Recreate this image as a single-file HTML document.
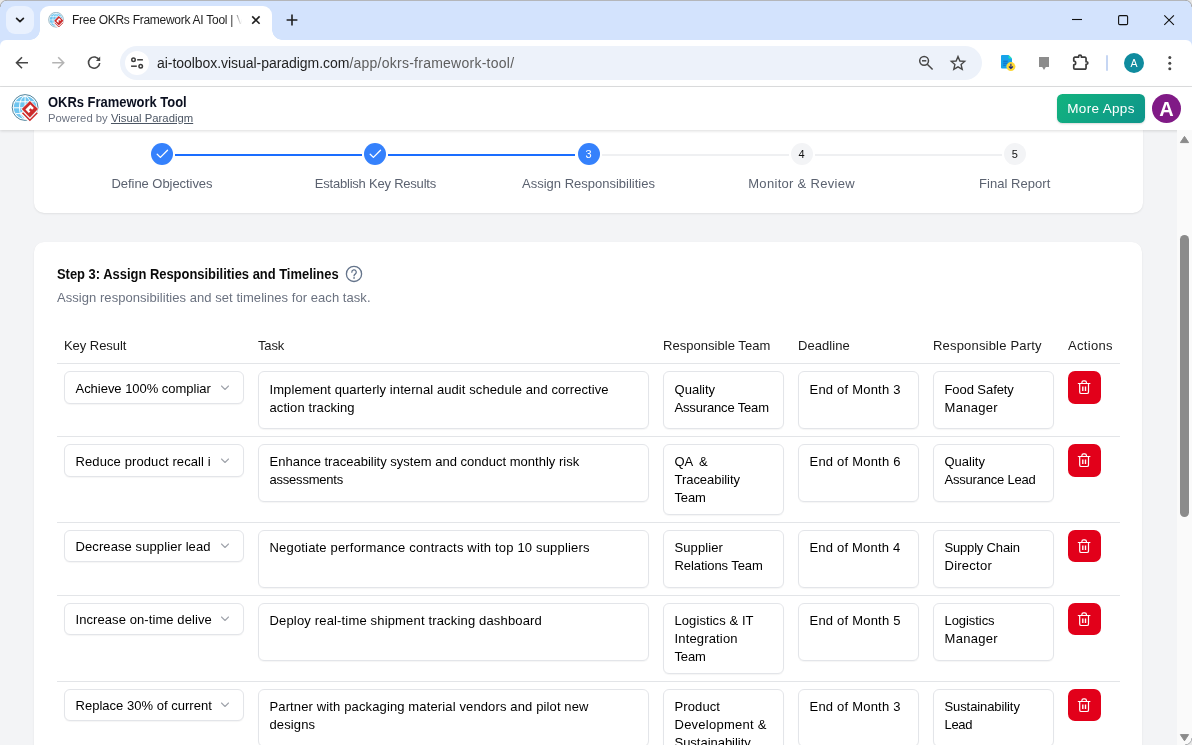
<!DOCTYPE html>
<html lang="en">
<head>
<meta charset="utf-8">
<title>Free OKRs Framework AI Tool | Visual Paradigm</title>
<style>
*{box-sizing:border-box;margin:0;padding:0}
html,body{width:1192px;height:745px;overflow:hidden;background:#f3f4f6}
body{font-family:"Liberation Sans",sans-serif;color:#111;position:relative}
#root{position:absolute;left:0;top:0;width:1192px;height:745px;overflow:hidden;will-change:transform}
.abs{position:absolute}
.nw{white-space:nowrap}
/* ---------- browser chrome ---------- */
#tabstrip{left:0;top:0;width:1192px;height:50px;background:#d3e3fd;border-top:1px solid #b4b6ba}
#tabsearch{left:6px;top:6px;width:28px;height:28px;border-radius:9px;background:#e9f1fe}
#tab{left:40px;top:6px;width:232px;height:34px;background:#fff;border-radius:9px 9px 0 0}
#tab:before,#tab:after{content:"";position:absolute;bottom:0;width:10px;height:10px}
#tab:before{left:-10px;background:radial-gradient(circle at 0 0,rgba(255,255,255,0) 9.5px,#fff 10px)}
#tab:after{right:-10px;background:radial-gradient(circle at 100% 0,rgba(255,255,255,0) 9.5px,#fff 10px)}
#tabtitle{left:72px;top:12px;font-size:12px;line-height:16px;color:#1f1f1f;width:170px;overflow:hidden;white-space:nowrap}
#tabfade{left:231px;top:10px;width:11px;height:20px;background:linear-gradient(90deg,rgba(255,255,255,0),#fff)}
#toolbar{left:0;top:40px;width:1192px;height:47px;background:#fff;border-bottom:1px solid #dfe0e1;border-radius:6px 6px 0 0}
#omni{left:120px;top:46px;width:862px;height:34px;border-radius:17px;background:#edf2fa}
#siteinfo{left:125px;top:51px;width:24px;height:24px;border-radius:12px;background:#fff}
#url{left:157px;top:54px;font-size:14px;line-height:18px;color:#1f1f1f;white-space:nowrap}
#url b{font-weight:normal}
#url span{color:#5e5e5e}
/* ---------- app ---------- */
#apphead{left:0;top:87px;width:1192px;height:43px;background:#fff;box-shadow:0 1px 3px rgba(0,0,0,.14)}
#apptitle{left:48px;top:93px;transform-origin:0 50%;font-size:14px;line-height:18px;font-weight:bold;color:#0b1020;white-space:nowrap}
#appsub{left:48px;top:111px;font-size:11.3px;line-height:14px;color:#6b7280;white-space:nowrap}
#appsub u{color:#4b5563}
#moreapps{left:1057px;top:94px;width:88px;height:29px;border-radius:5.5px;background:linear-gradient(135deg,#12b37e,#0e958b);color:#fff;font-size:13.5px;line-height:30px;text-align:center;box-shadow:0 1px 2px rgba(0,0,0,.15)}
#avatar{left:1152px;top:94px;width:29px;height:29px;border-radius:15px;background:#801a86;color:#fff;font-weight:bold;font-size:20px;line-height:30px;text-align:center}
#sbtrack{left:1177px;top:130px;width:15px;height:615px;background:#fafafa}
#sbthumb{left:1180px;top:235px;width:9px;height:282px;border-radius:4.5px;background:#8b8b8b}
.card{background:#fff;left:34px;width:1108px;box-shadow:0 1px 2px rgba(0,0,0,.08),0 0 1px rgba(0,0,0,.06)}
#card1{top:118px;height:95px;border-radius:10px;left:33.8px;width:1109.5px}
#card2{top:242.4px;height:520px;border-radius:10px;left:34.4px;width:1107.4px}
.step{width:22px;height:22px;border-radius:11px;top:143px;font-size:11px;line-height:22px;text-align:center}
.step.done{background:#3581fc;color:#fff}
.step.todo{background:#f3f4f6;color:#111}
.sline{top:154px;height:2px}
.slabel{top:175px;font-size:13px;line-height:18px;color:#5b6270;white-space:nowrap;transform:translateX(-50%)}
#h2{left:57px;top:264px;transform-origin:0 50%;font-size:14px;line-height:20px;font-weight:bold;color:#0a0a0a;white-space:nowrap}
#sub{left:57px;top:289px;font-size:13px;line-height:18px;color:#6b7280;white-space:nowrap}
.th{top:337px;font-size:13px;line-height:18px;color:#1a1a1a;white-space:nowrap}
.hr{left:57px;width:1063px;height:1px;background:#e3e5e8}
.box{background:#fff;border:1px solid #e3e5e9;border-radius:6px;font-size:13px;line-height:18px;color:#000;padding:9px 10.5px 0;overflow:hidden;box-shadow:0 1px 1px rgba(0,0,0,.04)}
.sel{left:64px;width:180px;height:33px;white-space:nowrap;padding-top:8px}
.del{left:1068px;width:33px;height:33px;border-radius:7px;background:#e2001a}
</style>
</head>
<body>
<div id="root">
<!-- browser chrome -->

<div id="tabstrip" class="abs"></div>
<div id="tabsearch" class="abs"></div>
<div id="tab" class="abs"></div>
<div id="tabtitle" class="abs"><span id="tt" style="letter-spacing:-0.271px">Free OKRs Framework AI Tool |</span> Visual Paradigm</div>
<div id="tabfade" class="abs"></div>
<div id="toolbar" class="abs"></div>
<div id="omni" class="abs"></div>
<div id="siteinfo" class="abs"></div>
<div id="url" class="abs"><b id="urld" style="letter-spacing:-0.046px">ai-toolbox.visual-paradigm.com</b><span id="urlp" style="letter-spacing:0.247px">/app/okrs-framework-tool/</span></div>

<div class="abs" style="left:0;top:0;width:7px;height:7px;background:radial-gradient(circle at 7px 7px,rgba(255,255,255,0) 6px,#a9abae 6.7px,#e8e8e8 7.6px)"></div>
<div class="abs" style="left:1185px;top:0;width:7px;height:7px;background:radial-gradient(circle at 0 7px,rgba(255,255,255,0) 6px,#a9abae 6.7px,#e8e8e8 7.6px)"></div>
<div class="abs" style="left:1185px;top:738px;width:7px;height:7px;background:radial-gradient(circle at 0 0,rgba(255,255,255,0) 6px,#a9abae 6.7px,#e8e8e8 7.6px);z-index:9"></div>
<!-- tab strip icons -->
<svg class="abs" style="left:14px;top:14px" width="12" height="12" viewBox="0 0 12 12"><path d="M2.6 4.3L6 7.7l3.4-3.4" fill="none" stroke="#1f1f1f" stroke-width="1.7" stroke-linecap="round" stroke-linejoin="round"/></svg>
<svg class="abs" style="left:48px;top:12px" width="16" height="16" viewBox="0 0 28 28"><circle cx="14.1" cy="13.5" r="12.9" fill="#fff" stroke="#3b7590" stroke-width="0.9"/>
<circle cx="14.1" cy="13.5" r="11.3" fill="#6ec5f0"/>
<g fill="none" stroke="#fff" stroke-width="1">
<path d="M2.5 13.8h23M4.5 7.8h19M4.5 19.6h19M14.1 2v23"/>
<ellipse cx="14.1" cy="13.5" rx="5.6" ry="11.3"/>
</g>
<path d="M10.4 18.2l8.5 8.5 8.5-8.5" fill="none" stroke="#fff" stroke-width="3.6"/>
<path d="M11.5 18.8l7.4 7.4 7.4-7.4" fill="none" stroke="#cc2b2b" stroke-width="1.6"/>
<path d="M18.9 6.2l9 9-9 9-9-9z" fill="#fff"/>
<path d="M18.9 6.9l8.1 8.2-8.1 8.4-8.1-8.4z" fill="#cc2b2b"/>
<path d="M19.4 10.6l3.4 3.4-1.7 1.7-1.5-1.5-1.7 1.7 1.5 1.5-1.6 1.6-3.4-3.4z" fill="#fff"/></svg>
<svg class="abs" style="left:250px;top:14px" width="12" height="12" viewBox="0 0 12 12"><path d="M2.2 2.4l7.4 7.4M9.6 2.4L2.2 9.8" fill="none" stroke="#1f1f1f" stroke-width="1.6"/></svg>
<svg class="abs" style="left:285px;top:13px" width="14" height="14" viewBox="0 0 14 14"><path d="M7 1.6v10.8M1.6 7h10.8" fill="none" stroke="#1f1f1f" stroke-width="1.6"/></svg>
<svg class="abs" style="left:1066px;top:10px" width="120" height="20" viewBox="0 0 120 20"><g fill="none" stroke="#111" stroke-width="1.1"><path d="M6 9.5h10"/><rect x="52.6" y="5.6" width="9" height="9" rx="1.2"/><path d="M98.3 5.3l9.6 9.6M107.9 5.3l-9.6 9.6"/></g></svg>
<!-- toolbar icons -->
<svg class="abs" style="left:12px;top:53px" width="20" height="20" viewBox="0 0 20 20"><path d="M16 9.8H5M10 4.3L4.5 9.8 10 15.3" fill="none" stroke="#474747" stroke-width="1.6" stroke-linejoin="miter"/></svg>
<svg class="abs" style="left:48px;top:53px" width="20" height="20" viewBox="0 0 20 20"><path d="M4.2 9.8h11M10.2 4.3l5.5 5.5-5.5 5.5" fill="none" stroke="#b4b4b4" stroke-width="1.6"/></svg>
<svg class="abs" style="left:84px;top:53px" width="20" height="20" viewBox="0 0 20 20"><path d="M15.2 7.2A5.6 5.6 0 1 0 15.7 10" fill="none" stroke="#474747" stroke-width="1.6"/><path d="M16.2 3.6v4.3h-4.3z" fill="#474747"/></svg>
<svg class="abs" style="left:127px;top:53px" width="20" height="20" viewBox="0 0 20 20"><g fill="none" stroke="#3c3c3c" stroke-width="1.5"><circle cx="6.5" cy="6.8" r="1.75"/><path d="M10.2 6.8h5.7"/><circle cx="13.7" cy="13.2" r="1.75"/><path d="M4.1 13.2h5.7"/></g></svg>
<svg class="abs" style="left:916px;top:53px" width="20" height="20" viewBox="0 0 20 20"><g fill="none" stroke="#474747" stroke-width="1.5"><circle cx="8.1" cy="7.8" r="4.4"/><path d="M11.3 11.2l5.3 5.3"/><path d="M6 7.8h4.3"/></g></svg>
<svg class="abs" style="left:948px;top:53px" width="20" height="20" viewBox="0 0 20 20"><path d="M10 3.6l1.9 4.4 4.8.4-3.6 3.2 1.1 4.7-4.2-2.5-4.2 2.5 1.1-4.7-3.6-3.2 4.8-.4z" fill="none" stroke="#474747" stroke-width="1.4" stroke-linejoin="miter"/></svg>
<svg class="abs" style="left:998px;top:52px" width="22" height="22" viewBox="0 0 22 22"><path d="M4 3h6.6l3.4 3.4V16.5H4a1 1 0 0 1-1-1V4a1 1 0 0 1 1-1z" fill="#17a3ea"/><path d="M10.6 3l3.4 3.4h-3.4z" fill="#1de9b6"/><path d="M5.2 9.2h4.6M5.2 11.2h4.6M5.2 13.2h2.6" stroke="#1259b8" stroke-width="0.8"/><circle cx="12.9" cy="14.6" r="4.5" fill="#fdd835"/><path d="M12.9 11.8v4.6M10.9 14.5l2 2 2-2" fill="none" stroke="#1a237e" stroke-width="1.1"/></svg>
<svg class="abs" style="left:1036px;top:54px" width="16" height="18" viewBox="0 0 16 18"><path d="M3 3h10v10h-3.2L8 16 6.2 13H3z" fill="#8c8c8c"/></svg>
<svg class="abs" style="left:1071px;top:53px" width="20" height="20" viewBox="0 0 20 20"><path d="M3.95 4.15H7.55V3.6A1.45 1.45 0 0 1 10.45 3.6V4.15H13.85A1.2 1.2 0 0 1 15.05 5.35V8.75H15.6A1.25 1.25 0 0 1 15.6 11.25H15.05V14.95A1.2 1.2 0 0 1 13.85 16.15H3.95A1.2 1.2 0 0 1 2.75 14.95V11.8A1.9 1.9 0 0 0 2.75 8V5.35A1.2 1.2 0 0 1 3.95 4.15Z" fill="none" stroke="#3c3c3c" stroke-width="1.7" stroke-linejoin="round"/></svg>
<div class="abs" style="left:1106px;top:55px;width:2px;height:16px;background:#c6d6f3;border-radius:1px"></div>
<div class="abs" style="left:1124px;top:53px;width:20px;height:20px;border-radius:10px;background:#0f8b9e;color:#fff;font-size:10.5px;line-height:20px;text-align:center">A</div>
<svg class="abs" style="left:1160px;top:53px" width="20" height="20" viewBox="0 0 20 20"><g fill="#474747"><circle cx="9.8" cy="4.6" r="1.5"/><circle cx="9.8" cy="10.2" r="1.5"/><circle cx="9.8" cy="15.8" r="1.5"/></g></svg>

<!-- page -->
<div id="card1" class="abs card"></div>
<div id="card2" class="abs card"></div>
<!-- GEN -->
<div class="abs sline" style="left:175px;width:187.39999999999998px;background:#1a6dff"></div>
<div class="abs sline" style="left:388.4px;width:187.10000000000002px;background:#1a6dff"></div>
<div class="abs sline" style="left:601.5px;width:187.10000000000002px;background:#eff0f2"></div>
<div class="abs sline" style="left:814.6px;width:187.10000000000002px;background:#eff0f2"></div>
<div class="abs step done" style="left:151px"><svg width="22" height="22" viewBox="0 0 22 22" style="display:block"><path d="M6.2 11.2l3.2 3.2 7.1-7.2" fill="none" stroke="#fff" stroke-width="1.3" stroke-linecap="round" stroke-linejoin="round"/></svg></div>
<div class="abs slabel" id="sl0" style="letter-spacing:-0.052px;left:162px">Define Objectives</div>
<div class="abs step done" style="left:364.4px"><svg width="22" height="22" viewBox="0 0 22 22" style="display:block"><path d="M6.2 11.2l3.2 3.2 7.1-7.2" fill="none" stroke="#fff" stroke-width="1.3" stroke-linecap="round" stroke-linejoin="round"/></svg></div>
<div class="abs slabel" id="sl1" style="letter-spacing:-0.216px;left:375.4px">Establish Key Results</div>
<div class="abs step done" style="left:577.5px">3</div>
<div class="abs slabel" id="sl2" style="letter-spacing:-0.002px;left:588.5px">Assign Responsibilities</div>
<div class="abs step todo" style="left:790.6px">4</div>
<div class="abs slabel" id="sl3" style="letter-spacing:0.302px;left:801.6px">Monitor &amp; Review</div>
<div class="abs step todo" style="left:1003.7px">5</div>
<div class="abs slabel" id="sl4" style="letter-spacing:0.049px;left:1014.7px">Final Report</div>
<div id="h2" class="abs" style="transform:scaleX(0.9234)">Step 3: Assign Responsibilities and Timelines</div>
<svg class="abs" style="left:345px;top:265px" width="18" height="18" viewBox="0 0 18 18"><circle cx="9" cy="8.9" r="7.6" fill="none" stroke="#64748b" stroke-width="1.3"/><path d="M6.8 7.2a2.25 2.25 0 1 1 3.4 1.9c-.8.5-1.15.9-1.15 1.7" fill="none" stroke="#64748b" stroke-width="1.3" stroke-linecap="round"/><circle cx="9.05" cy="12.9" r=".85" fill="#64748b"/></svg>
<div id="sub" class="abs" style="letter-spacing:0.051px">Assign responsibilities and set timelines for each task.</div>
<div class="abs th" id="th0" style="letter-spacing:-0.047px;left:64px">Key Result</div>
<div class="abs th" id="th1" style="letter-spacing:-0.134px;left:258px">Task</div>
<div class="abs th" id="th2" style="letter-spacing:0.036px;left:663px">Responsible Team</div>
<div class="abs th" id="th3" style="letter-spacing:0.059px;left:798px">Deadline</div>
<div class="abs th" id="th4" style="letter-spacing:0.188px;left:933px">Responsible Party</div>
<div class="abs th" id="th5" style="letter-spacing:0.323px;left:1068px">Actions</div>
<div class="abs hr" style="top:363px"></div>
<div class="abs box sel" style="top:371px"><span class="t" id="s0" style="letter-spacing:-0.027px">Achieve 100% compliar</span><svg class="abs" style="left:155px;top:11px" width="10" height="10" viewBox="0 0 10 10"><path d="M1.5 3l3.5 3.5L8.5 3" fill="none" stroke="#a0a4ab" stroke-width="1.1" stroke-linecap="round" stroke-linejoin="round"/></svg></div>
<div class="abs box" style="left:258px;top:371px;width:391px;height:58px"><span class="t nw" id="k0_0" style="letter-spacing:0.092px">Implement quarterly internal audit schedule and corrective</span><br><span class="t nw" id="k0_1" style="letter-spacing:0.091px">action tracking</span><br></div>
<div class="abs box" style="left:663px;top:371px;width:121px;height:58px"><span class="t nw" id="m0_0" style="letter-spacing:0.019px">Quality</span><br><span class="t nw" id="m0_1" style="letter-spacing:-0.164px">Assurance Team</span><br></div>
<div class="abs box" style="left:798px;top:371px;width:121px;height:58px"><span class="t nw" id="d0" style="letter-spacing:0.209px">End of Month 3</span></div>
<div class="abs box" style="left:933px;top:371px;width:121px;height:58px"><span class="t nw" id="p0_0" style="letter-spacing:-0.074px">Food Safety</span><br><span class="t nw" id="p0_1" style="letter-spacing:0.312px">Manager</span><br></div>
<div class="abs del" style="top:371px"><svg width="33" height="33" viewBox="0 0 33 33" style="display:block"><g fill="none" stroke="#fff" stroke-width="1.2" stroke-linecap="round" stroke-linejoin="round"><path d="M10.3 12.5h11.6"/><path d="M13.9 12.3v-.8a1.6 1.6 0 0 1 1.6-1.6h1.3a1.6 1.6 0 0 1 1.6 1.6v.8"/><path d="M11.7 12.7v8.2a1.6 1.6 0 0 0 1.6 1.6h5.6a1.6 1.6 0 0 0 1.6-1.6v-8.2"/><path d="M14.8 15.4v4.6M17.5 15.4v4.6" stroke-width="1.4" stroke-linecap="butt"/></g></svg></div>
<div class="abs hr" style="top:436px"></div>
<div class="abs box sel" style="top:444px"><span class="t" id="s1" style="letter-spacing:0.101px">Reduce product recall i</span><svg class="abs" style="left:155px;top:11px" width="10" height="10" viewBox="0 0 10 10"><path d="M1.5 3l3.5 3.5L8.5 3" fill="none" stroke="#a0a4ab" stroke-width="1.1" stroke-linecap="round" stroke-linejoin="round"/></svg></div>
<div class="abs box" style="left:258px;top:444px;width:391px;height:58px;padding-top:8px"><span class="t nw" id="k1_0" style="letter-spacing:0.008px">Enhance traceability system and conduct monthly risk</span><br><span class="t nw" id="k1_1" style="letter-spacing:-0.216px">assessments</span><br></div>
<div class="abs box" style="left:663px;top:444px;width:121px;height:71px;padding-top:8px"><span class="t nw" id="m1_0" style="word-spacing:2.941px">QA &amp;</span><br><span class="t nw" id="m1_1" style="letter-spacing:-0.04px">Traceability</span><br><span class="t nw" id="m1_2" style="letter-spacing:-0.174px">Team</span><br></div>
<div class="abs box" style="left:798px;top:444px;width:121px;height:58px;padding-top:8px"><span class="t nw" id="d1" style="letter-spacing:0.209px">End of Month 6</span></div>
<div class="abs box" style="left:933px;top:444px;width:121px;height:58px;padding-top:8px"><span class="t nw" id="p1_0" style="letter-spacing:-0.01px">Quality</span><br><span class="t nw" id="p1_1" style="letter-spacing:-0.204px">Assurance Lead</span><br></div>
<div class="abs del" style="top:444px"><svg width="33" height="33" viewBox="0 0 33 33" style="display:block"><g fill="none" stroke="#fff" stroke-width="1.2" stroke-linecap="round" stroke-linejoin="round"><path d="M10.3 12.5h11.6"/><path d="M13.9 12.3v-.8a1.6 1.6 0 0 1 1.6-1.6h1.3a1.6 1.6 0 0 1 1.6 1.6v.8"/><path d="M11.7 12.7v8.2a1.6 1.6 0 0 0 1.6 1.6h5.6a1.6 1.6 0 0 0 1.6-1.6v-8.2"/><path d="M14.8 15.4v4.6M17.5 15.4v4.6" stroke-width="1.4" stroke-linecap="butt"/></g></svg></div>
<div class="abs hr" style="top:522px"></div>
<div class="abs box sel" style="top:530px;height:32px;padding-top:7px"><span class="t" id="s2" style="letter-spacing:0.097px">Decrease supplier lead</span><svg class="abs" style="left:155px;top:10px" width="10" height="10" viewBox="0 0 10 10"><path d="M1.5 3l3.5 3.5L8.5 3" fill="none" stroke="#a0a4ab" stroke-width="1.1" stroke-linecap="round" stroke-linejoin="round"/></svg></div>
<div class="abs box" style="left:258px;top:530px;width:391px;height:58px;padding-top:8px"><span class="t nw" id="k2_0" style="letter-spacing:0.177px">Negotiate performance contracts with top 10 suppliers</span><br></div>
<div class="abs box" style="left:663px;top:530px;width:121px;height:58px;padding-top:8px"><span class="t nw" id="m2_0" style="letter-spacing:0.1px">Supplier</span><br><span class="t nw" id="m2_1" style="letter-spacing:-0.084px">Relations Team</span><br></div>
<div class="abs box" style="left:798px;top:530px;width:121px;height:58px;padding-top:8px"><span class="t nw" id="d2" style="letter-spacing:0.195px">End of Month 4</span></div>
<div class="abs box" style="left:933px;top:530px;width:121px;height:58px;padding-top:8px"><span class="t nw" id="p2_0" style="letter-spacing:-0.177px">Supply Chain</span><br><span class="t nw" id="p2_1" style="letter-spacing:0.248px">Director</span><br></div>
<div class="abs del" style="top:530px;height:32px"><svg width="33" height="33" viewBox="0 0 33 33" style="display:block;margin-top:-0.5px"><g fill="none" stroke="#fff" stroke-width="1.2" stroke-linecap="round" stroke-linejoin="round"><path d="M10.3 12.5h11.6"/><path d="M13.9 12.3v-.8a1.6 1.6 0 0 1 1.6-1.6h1.3a1.6 1.6 0 0 1 1.6 1.6v.8"/><path d="M11.7 12.7v8.2a1.6 1.6 0 0 0 1.6 1.6h5.6a1.6 1.6 0 0 0 1.6-1.6v-8.2"/><path d="M14.8 15.4v4.6M17.5 15.4v4.6" stroke-width="1.4" stroke-linecap="butt"/></g></svg></div>
<div class="abs hr" style="top:595px"></div>
<div class="abs box sel" style="top:603px;height:32px;padding-top:7px"><span class="t" id="s3" style="letter-spacing:0.082px">Increase on-time delive</span><svg class="abs" style="left:155px;top:10px" width="10" height="10" viewBox="0 0 10 10"><path d="M1.5 3l3.5 3.5L8.5 3" fill="none" stroke="#a0a4ab" stroke-width="1.1" stroke-linecap="round" stroke-linejoin="round"/></svg></div>
<div class="abs box" style="left:258px;top:603px;width:391px;height:58px;padding-top:8px"><span class="t nw" id="k3_0" style="letter-spacing:0.166px">Deploy real-time shipment tracking dashboard</span><br></div>
<div class="abs box" style="left:663px;top:603px;width:121px;height:71px;padding-top:8px"><span class="t nw" id="m3_0" style="letter-spacing:0.076px">Logistics &amp; IT</span><br><span class="t nw" id="m3_1" style="letter-spacing:0.16px">Integration</span><br><span class="t nw" id="m3_2" style="letter-spacing:-0.174px">Team</span><br></div>
<div class="abs box" style="left:798px;top:603px;width:121px;height:58px;padding-top:8px"><span class="t nw" id="d3" style="letter-spacing:0.209px">End of Month 5</span></div>
<div class="abs box" style="left:933px;top:603px;width:121px;height:58px;padding-top:8px"><span class="t nw" id="p3_0" style="letter-spacing:-0.064px">Logistics</span><br><span class="t nw" id="p3_1" style="letter-spacing:0.312px">Manager</span><br></div>
<div class="abs del" style="top:603px;height:32px"><svg width="33" height="33" viewBox="0 0 33 33" style="display:block;margin-top:-0.5px"><g fill="none" stroke="#fff" stroke-width="1.2" stroke-linecap="round" stroke-linejoin="round"><path d="M10.3 12.5h11.6"/><path d="M13.9 12.3v-.8a1.6 1.6 0 0 1 1.6-1.6h1.3a1.6 1.6 0 0 1 1.6 1.6v.8"/><path d="M11.7 12.7v8.2a1.6 1.6 0 0 0 1.6 1.6h5.6a1.6 1.6 0 0 0 1.6-1.6v-8.2"/><path d="M14.8 15.4v4.6M17.5 15.4v4.6" stroke-width="1.4" stroke-linecap="butt"/></g></svg></div>
<div class="abs hr" style="top:681px"></div>
<div class="abs box sel" style="top:689px;height:32px;padding-top:7px"><span class="t" id="s4" style="letter-spacing:0.02px">Replace 30% of current</span><svg class="abs" style="left:155px;top:10px" width="10" height="10" viewBox="0 0 10 10"><path d="M1.5 3l3.5 3.5L8.5 3" fill="none" stroke="#a0a4ab" stroke-width="1.1" stroke-linecap="round" stroke-linejoin="round"/></svg></div>
<div class="abs box" style="left:258px;top:689px;width:391px;height:58px;padding-top:8px"><span class="t nw" id="k4_0" style="letter-spacing:0.131px">Partner with packaging material vendors and pilot new</span><br><span class="t nw" id="k4_1" style="letter-spacing:0.112px">designs</span><br></div>
<div class="abs box" style="left:663px;top:689px;width:121px;height:89px;padding-top:8px"><span class="t nw" id="m4_0" style="letter-spacing:0.113px">Product</span><br><span class="t nw" id="m4_1" style="letter-spacing:0.247px">Development &amp;</span><br><span class="t nw" id="m4_2" style="letter-spacing:-0.022px">Sustainability</span><br><span class="t nw" id="m4_3">Team</span><br></div>
<div class="abs box" style="left:798px;top:689px;width:121px;height:58px;padding-top:8px"><span class="t nw" id="d4" style="letter-spacing:0.209px">End of Month 3</span></div>
<div class="abs box" style="left:933px;top:689px;width:121px;height:58px;padding-top:8px"><span class="t nw" id="p4_0" style="letter-spacing:-0.094px">Sustainability</span><br><span class="t nw" id="p4_1" style="letter-spacing:-0.305px">Lead</span><br></div>
<div class="abs del" style="top:689px;height:32px"><svg width="33" height="33" viewBox="0 0 33 33" style="display:block;margin-top:-0.5px"><g fill="none" stroke="#fff" stroke-width="1.2" stroke-linecap="round" stroke-linejoin="round"><path d="M10.3 12.5h11.6"/><path d="M13.9 12.3v-.8a1.6 1.6 0 0 1 1.6-1.6h1.3a1.6 1.6 0 0 1 1.6 1.6v.8"/><path d="M11.7 12.7v8.2a1.6 1.6 0 0 0 1.6 1.6h5.6a1.6 1.6 0 0 0 1.6-1.6v-8.2"/><path d="M14.8 15.4v4.6M17.5 15.4v4.6" stroke-width="1.4" stroke-linecap="butt"/></g></svg></div>
<!-- /GEN -->

<div id="apphead" class="abs"></div>
<svg class="abs" style="left:11px;top:94px" width="28" height="28" viewBox="0 0 28 28"><circle cx="14.1" cy="13.5" r="12.9" fill="#fff" stroke="#3b7590" stroke-width="0.9"/>
<circle cx="14.1" cy="13.5" r="11.3" fill="#6ec5f0"/>
<g fill="none" stroke="#fff" stroke-width="1">
<path d="M2.5 13.8h23M4.5 7.8h19M4.5 19.6h19M14.1 2v23"/>
<ellipse cx="14.1" cy="13.5" rx="5.6" ry="11.3"/>
</g>
<path d="M10.4 18.2l8.5 8.5 8.5-8.5" fill="none" stroke="#fff" stroke-width="3.6"/>
<path d="M11.5 18.8l7.4 7.4 7.4-7.4" fill="none" stroke="#cc2b2b" stroke-width="1.6"/>
<path d="M18.9 6.2l9 9-9 9-9-9z" fill="#fff"/>
<path d="M18.9 6.9l8.1 8.2-8.1 8.4-8.1-8.4z" fill="#cc2b2b"/>
<path d="M19.4 10.6l3.4 3.4-1.7 1.7-1.5-1.5-1.7 1.7 1.5 1.5-1.6 1.6-3.4-3.4z" fill="#fff"/></svg>
<div id="apptitle" class="abs" style="transform:scaleX(0.9253)">OKRs Framework Tool</div>
<div id="appsub" class="abs" style="letter-spacing:0.013px">Powered by <u>Visual Paradigm</u></div>
<div id="moreapps" class="abs" style="letter-spacing:0.328px">More Apps</div>
<div id="avatar" class="abs">A</div>
<div id="sbtrack" class="abs"></div>
<div id="sbthumb" class="abs"></div>
<svg class="abs" style="left:1177px;top:130px" width="15" height="615" viewBox="0 0 15 615"><path d="M3.4 12.6L7.5 6.4l4.1 6.2z" fill="#8b8b8b" stroke="#8b8b8b" stroke-width="1" stroke-linejoin="round"/><path d="M3.4 604.6l4.1 6.2 4.1-6.2z" fill="#8b8b8b" stroke="#8b8b8b" stroke-width="1" stroke-linejoin="round"/></svg>
</div>
</body>
</html>
